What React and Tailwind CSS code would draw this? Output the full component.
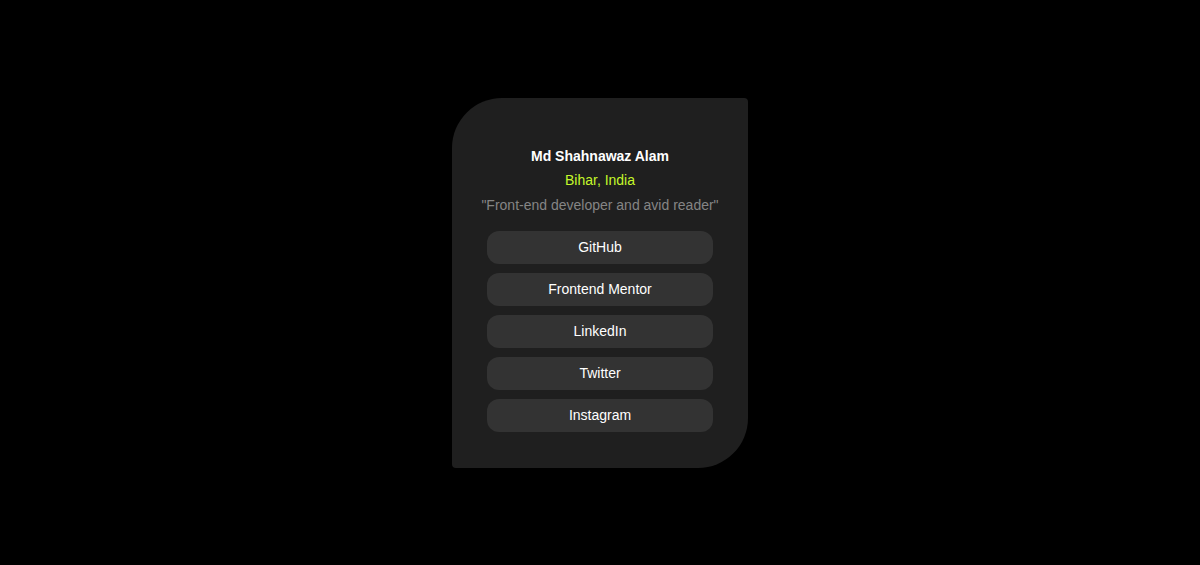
import React from 'react';

const links = ['GitHub', 'Frontend Mentor', 'LinkedIn', 'Twitter', 'Instagram'];

export default function App() {
  return (
    <div className="min-h-screen w-full bg-black flex justify-center pt-[98px] font-['Liberation_Sans',Arial,sans-serif]">
      {/* Profile card */}
      <div className="w-[296px] h-[370px] bg-[#1f1f1f] rounded-tl-[50px] rounded-br-[50px] rounded-tr-[4px] rounded-bl-[4px] flex flex-col items-center pt-[48px]">
        <h1 className="text-white font-bold text-[14px] leading-[20px]">Md Shahnawaz Alam</h1>
        <p className="text-[#c4f82a] text-[14px] leading-[20px] mt-[4px]">Bihar, India</p>
        <p className="text-[#858585] text-[14px] leading-[20px] mt-[5px]">"Front-end developer and avid reader"</p>
        <div className="flex flex-col gap-[9px] mt-[16px]">
          {links.map((l) => (
            <a
              key={l}
              href="#"
              className="w-[226px] h-[33px] rounded-xl bg-[#333333] text-white text-[14px] flex items-center justify-center"
            >
              {l}
            </a>
          ))}
        </div>
      </div>
    </div>
  );
}
